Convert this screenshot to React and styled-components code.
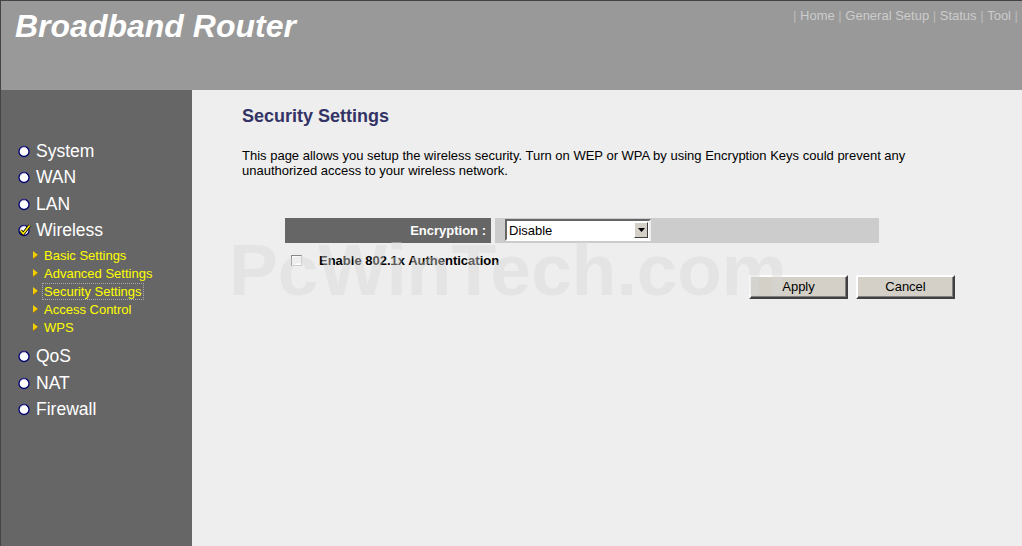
import React from 'react'
import styled, { createGlobalStyle } from 'styled-components'

const GlobalStyle = createGlobalStyle`
  body{
    margin:0;
    background:#eee;
    font-family:Arial,"Liberation Sans",sans-serif;
  }
`

const mainMenu = ['System', 'WAN', 'LAN', 'Wireless']
const subMenu = ['Basic Settings', 'Advanced Settings', 'Security Settings', 'Access Control', 'WPS']
const lowerMenu = ['QoS', 'NAT', 'Firewall']
const topLinks = ['Home', 'General Setup', 'Status', 'Tool']

function Bullet({ checked }) {
  return (
    <svg width="13" height="13" viewBox="0 0 13 13">
      <circle cx="6" cy="6.5" r="5" fill="#fff" stroke="#000070" strokeWidth="1.3" />
      <path d="M2.5 4.2 A4 4 0 0 1 8 2.6" fill="none" stroke="#c8c8e0" strokeWidth="0.8" />
      {checked && (
        <path d="M2.6 6.6 L5.2 9.8 L11.6 1.6" fill="none" stroke="#000" strokeWidth="3.2" strokeLinejoin="round" />
      )}
      {checked && (
        <path d="M2.6 6.6 L5.2 9.8 L11.6 1.6" fill="none" stroke="#ffea00" strokeWidth="1.6" strokeLinejoin="round" />
      )}
    </svg>
  )
}

function Arrow() {
  return (
    <svg width="5" height="8" viewBox="0 0 5 8">
      <polygon points="0,0 5,4 0,8" fill="#f5d000" />
      <polyline points="0,8 5,4" stroke="#a07000" strokeWidth="1" fill="none" />
    </svg>
  )
}

export default function App() {
  return (
    <>
      <GlobalStyle />
      <Page>
        <Header>
          <Title>Broadband Router</Title>
          <TopNav>
            <Sep>|</Sep>
            {topLinks.map((t) => (
              <React.Fragment key={t}>
                <span>{t}</span>
                <Sep>|</Sep>
              </React.Fragment>
            ))}
          </TopNav>
        </Header>

        <Sidebar>
          {mainMenu.map((m) => (
            <MenuItem key={m}>
              <Bullet checked={m === 'Wireless'} />
              {m}
            </MenuItem>
          ))}
          <SubList>
            {subMenu.map((s) => (
              <SubItem key={s}>
                <Arrow />
                <SubLabel active={s === 'Security Settings'}>{s}</SubLabel>
              </SubItem>
            ))}
          </SubList>
          {lowerMenu.map((m) => (
            <MenuItem key={m}>
              <Bullet />
              {m}
            </MenuItem>
          ))}
        </Sidebar>

        <Content>
          <Heading>Security Settings</Heading>
          <Intro>
            This page allows you setup the wireless security. Turn on WEP or WPA by using Encryption Keys could prevent any
            unauthorized access to your wireless network.
          </Intro>

          <Form>
            <Row>
              <Label>Encryption :</Label>
              <Value>
                <Select>
                  <span>Disable</span>
                  <DropButton>
                    <svg width="7" height="4" viewBox="0 0 7 4">
                      <polygon points="0,0 7,0 3.5,4" fill="#000" />
                    </svg>
                  </DropButton>
                </Select>
              </Value>
            </Row>

            <CheckRow>
              <CheckBox />
              <span>Enable 802.1x Authentication</span>
            </CheckRow>

            <Buttons>
              <Button>Apply</Button>
              <Button>Cancel</Button>
            </Buttons>
          </Form>

          <Watermark>PcWinTech.com</Watermark>
        </Content>
      </Page>
    </>
  )
}

const Page = styled.div`
  display:grid;
  grid-template-columns:191px 1fr;
  grid-template-rows:90px 1fr;
  min-height:100vh;
  border-left:1px solid #444;
  box-sizing:border-box;
`

const Header = styled.div`
  grid-column:1 / 3;
  display:flex;
  justify-content:space-between;
  align-items:flex-start;
  background:#999;
  border-top:1px solid #444;
`

const Title = styled.h1`
  margin:0;
  padding:9px 0 0 14px;
  font-size:32px;
  line-height:32px;
  font-weight:bold;
  font-style:italic;
  color:#fff;
`

const TopNav = styled.div`
  display:flex;
  gap:3.6px;
  padding:7px 4px 0 0;
  font-size:13px;
  color:#ccc;
`

const Sep = styled.span`
  color:#bbb;
`

const Sidebar = styled.div`
  background:#666;
  padding:48px 0 0 17px;
`

const MenuItem = styled.div`
  display:flex;
  align-items:center;
  gap:5px;
  height:26.5px;
  font-size:17.5px;
  color:#fff;
`

const SubList = styled.div`
  margin:2px 0 7.5px 15px;
`

const SubItem = styled.div`
  display:flex;
  align-items:center;
  gap:6px;
  height:18px;
  font-size:13px;
  color:#ff0;
`

const SubLabel = styled.span`
  padding:0 1px;
  margin-left:-1px;
  outline:${(p) => (p.active ? '1px dotted #aaa' : 'none')};
  outline-offset:0;
`

const Content = styled.div`
  position:relative;
  padding-left:50px;
`

const Heading = styled.h2`
  margin:15.5px 0 0;
  font-size:18px;
  font-weight:bold;
  color:#333366;
`

const Intro = styled.p`
  margin:21px 0 0;
  width:700px;
  font-size:13px;
  line-height:15px;
  color:#000;
`

const Form = styled.div`
  margin:40px 0 0 43px;
  width:670px;
`

const Row = styled.div`
  display:flex;
  gap:4px;
  width:594px;
  height:25px;
`

const Label = styled.div`
  width:206px;
  display:flex;
  align-items:center;
  justify-content:flex-end;
  padding-right:5px;
  box-sizing:border-box;
  background:#666;
  color:#fff;
  font-size:13px;
  font-weight:bold;
`

const Value = styled.div`
  flex:1;
  display:flex;
  align-items:center;
  padding-left:10px;
  background:#ccc;
`

const Select = styled.div`
  width:146px;
  height:22px;
  box-sizing:border-box;
  display:flex;
  align-items:center;
  justify-content:space-between;
  padding:0 1px 0 2px;
  background:#fff;
  border:2px solid;
  border-color:#666 #eee #fff #666;
  font-size:13px;
  color:#000;
`

const DropButton = styled.span`
  width:14px;
  height:16px;
  box-sizing:border-box;
  display:flex;
  align-items:center;
  justify-content:center;
  background:#d4d0c8;
  border:1px solid;
  border-color:#fff #404040 #404040 #fff;
`

const CheckRow = styled.div`
  display:flex;
  align-items:center;
  gap:17px;
  height:18px;
  margin-top:9px;
  padding-left:6px;
  font-size:13px;
  font-weight:bold;
  color:#000;
`

const CheckBox = styled.span`
  width:11px;
  height:11px;
  box-sizing:border-box;
  background:#fff;
  border:1px solid;
  border-color:#888 #ccc #ccc #888;
`

const Buttons = styled.div`
  display:flex;
  justify-content:flex-end;
  gap:8px;
  margin-top:5px;
`

const Button = styled.button`
  width:99px;
  height:24px;
  padding:0;
  background:#d4d0c8;
  border:2px solid;
  border-color:#fff #404040 #404040 #fff;
  box-shadow:inset -1px -1px 0 #808080;
  font-family:Arial,"Liberation Sans",sans-serif;
  font-size:13px;
  color:#000;
`

const Watermark = styled.div`
  position:absolute;
  left:37px;
  top:144px;
  font-size:73px;
  line-height:72px;
  font-weight:bold;
  color:rgba(215,215,215,0.42);
  pointer-events:none;
  white-space:nowrap;
`
